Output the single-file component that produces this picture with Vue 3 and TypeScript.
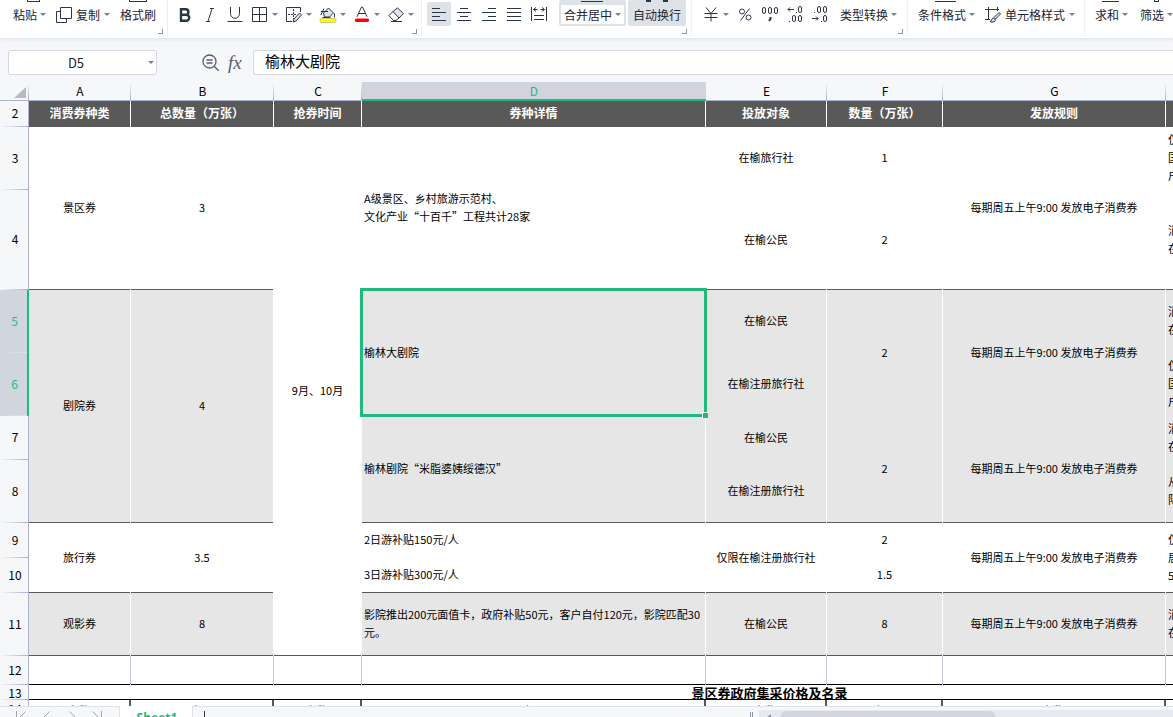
<script setup lang="ts">
interface Cell {
  text: string
  span?: number
  left?: boolean
  line?: boolean
  grey?: boolean
  selected?: boolean
}
interface Row {
  n: number
  h: number
  sel?: boolean
  cells: Cell[]
}

const columns = [
  { name: 'A', w: 102 },
  { name: 'B', w: 143 },
  { name: 'C', w: 88 },
  { name: 'D', w: 344 },
  { name: 'E', w: 121 },
  { name: 'F', w: 116 },
  { name: 'G', w: 223 },
  { name: 'H', w: 345 },
]
const titles = ['消费券种类', '总数量（万张）', '抢券时间', '券种详情', '投放对象', '数量（万张）', '发放规则', '']
const rule = '每期周五上午9:00 发放电子消费券'

const rows: Row[] = [
  {
    n: 3, h: 63, cells: [
      { text: '景区券', span: 2, line: true },
      { text: '3', span: 2, line: true },
      { text: '9月、10月', span: 9, line: true },
      { text: 'A级景区、乡村旅游示范村、\n文化产业“十百千”工程共计28家', span: 2, left: true, line: true },
      { text: '在榆旅行社' },
      { text: '1' },
      { text: rule, span: 2, line: true },
      { text: '仅\n国\n户', left: true },
    ],
  },
  {
    n: 4, h: 100, cells: [
      { text: '在榆公民', line: true },
      { text: '2', line: true },
      { text: '消\n在', left: true, line: true },
    ],
  },
  {
    n: 5, h: 63, sel: true, cells: [
      { text: '剧院券', span: 4, grey: true, line: true },
      { text: '4', span: 4, grey: true, line: true },
      { text: '榆林大剧院', span: 2, grey: true, left: true, selected: true },
      { text: '在榆公民', grey: true },
      { text: '2', span: 2, grey: true },
      { text: rule, span: 2, grey: true },
      { text: '消\n在', left: true, grey: true },
    ],
  },
  {
    n: 6, h: 63, sel: true, cells: [
      { text: '在榆注册旅行社', grey: true },
      { text: '仅\n国\n户', left: true, grey: true },
    ],
  },
  {
    n: 7, h: 44, cells: [
      { text: '榆林剧院“米脂婆姨绥德汉”', span: 2, grey: true, left: true, line: true },
      { text: '在榆公民', grey: true },
      { text: '2', span: 2, grey: true, line: true },
      { text: rule, span: 2, grey: true, line: true },
      { text: '消\n在', left: true, grey: true },
    ],
  },
  {
    n: 8, h: 63, cells: [
      { text: '在榆注册旅行社', grey: true, line: true },
      { text: '从\n际', left: true, grey: true, line: true },
    ],
  },
  {
    n: 9, h: 35, cells: [
      { text: '旅行券', span: 2, line: true },
      { text: '3.5', span: 2, line: true },
      { text: '2日游补贴150元/人', left: true },
      { text: '仅限在榆注册旅行社', span: 2, line: true },
      { text: '2' },
      { text: rule, span: 2, line: true },
      { text: '仅\n居\n5', span: 2, left: true, line: true },
    ],
  },
  {
    n: 10, h: 35, cells: [
      { text: '3日游补贴300元/人', left: true, line: true },
      { text: '1.5', line: true },
    ],
  },
  {
    n: 11, h: 63, cells: [
      { text: '观影券', grey: true, line: true },
      { text: '8', grey: true, line: true },
      { text: '影院推出200元面值卡，政府补贴50元，客户自付120元，影院匹配30元。', grey: true, left: true, line: true },
      { text: '在榆公民', grey: true, line: true },
      { text: '8', grey: true, line: true },
      { text: rule, grey: true, line: true },
      { text: '消\n在', left: true, grey: true, line: true },
    ],
  },
]
const lastRow = ['名称', '大厅', '名称', '大厅', '名称', '大厅', '名称', '']
</script>

<template>
  <div class="app">
    <header class="toolbar">
      <section class="group clip">
        <button class="tool"><i class="stub s1"></i>粘贴<i class="caret"></i></button>
        <button class="tool wide">
          <svg width="16" height="16" viewBox="0 0 16 16"><path d="M4.500 4.500H.5v11h10v-4M4.500.5h11v11h-11z" /></svg>
          复制<i class="caret"></i>
        </button>
        <button class="tool"><i class="stub s2"></i>格式刷</button>
        <i class="corner"></i>
      </section>

      <section class="group font">
        <div class="letters">
          <button class="tool" aria-label="加粗">
            <svg width="16" height="16" viewBox="0 0 16 16"><path class="bold" d="M4 2.200h4.600a2.800 2.800 0 0 1 0 5.600H4zM4 7.800h5.200a3 3 0 0 1 0 6H4z" /></svg>
          </button>
          <button class="tool" aria-label="斜体">
            <svg width="16" height="16" viewBox="0 0 16 16"><path d="M8 1.500h4M4 14.500h4M10 1.500l-4 13" /></svg>
          </button>
          <button class="tool" aria-label="下划线">
            <svg width="16" height="16" viewBox="0 0 16 16"><path d="M3.500 0v6.500a4.500 4.800 0 0 0 9 0V0M.5 14.500h15" /></svg>
          </button>
        </div>
        <button class="tool icon" aria-label="边框">
          <svg width="16" height="16" viewBox="0 0 16 16"><path d="M.5.5h14v14H.5zM.5 7.500h14M7.500.5v14" /></svg><i class="caret"></i>
        </button>
        <button class="tool icon" aria-label="绘制边框">
          <svg width="16" height="16" viewBox="0 0 16 16"><path d="M6 14.500H.5V.5h14V5" /><path d="M7.500 2v10M2 7.500h9" stroke-dasharray="2 1" /><path class="fill" d="M8 12l5.500-6 2 2-5.500 6-3 1z" /></svg><i class="caret"></i>
        </button>
        <button class="tool icon" aria-label="填充颜色">
          <svg width="16" height="16" viewBox="0 0 16 16"><path class="fill" d="M3.500 6L8.500 1l5 5-4 4h-5z" /><path d="M3.500 4.500H.8M8 4.500H2.500L.8 8M4 1.500l-1.500 3M14.500 6.500v4M2.500 10.500h8" /><rect x="0" y="11.500" width="16" height="4" rx="1" fill="#ff0" stroke="#a0a060" stroke-width=".5" /></svg><i class="caret"></i>
        </button>
        <button class="tool icon" aria-label="字体颜色">
          <svg width="16" height="16" viewBox="0 0 16 16"><path d="M3 9.800L7.500 0h1L13 9.800M4.500 6.500h7" /><rect x="1" y="11.500" width="14" height="3.500" rx="1.500" fill="#f00" stroke="none" /></svg><i class="caret"></i>
        </button>
        <button class="tool icon" aria-label="清除">
          <svg width="16" height="16" viewBox="0 0 16 16"><path class="fill" d="M5 4.500L9.500.8l6 6L11 11z" /><path d="M5 4.500L.8 8.500 5.500 13.500H8L11 11M3 14.500h11" /></svg><i class="caret"></i>
        </button>
        <i class="corner"></i>
      </section>

      <section class="group align">
        <button class="tool square active" aria-label="左对齐">
          <svg width="16" height="16" viewBox="0 0 16 16"><path d="M1 2.500h8M1 6.500h14M1 10.500h8M1 14.500h14" /></svg>
        </button>
        <button class="tool square" aria-label="居中">
          <svg width="16" height="16" viewBox="0 0 16 16"><path d="M4 2.500h8M1 6.500h14M4 10.500h8M1 14.500h14" /></svg>
        </button>
        <button class="tool square" aria-label="右对齐">
          <svg width="16" height="16" viewBox="0 0 16 16"><path d="M7 2.500h8M1 6.500h14M7 10.500h8M1 14.500h14" /></svg>
        </button>
        <button class="tool square" aria-label="两端对齐">
          <svg width="16" height="16" viewBox="0 0 16 16"><path d="M1 2.500h14M1 6.500h14M1 10.500h14M1 14.500h14" /></svg>
        </button>
        <button class="tool square" aria-label="分散对齐">
          <svg width="16" height="16" viewBox="0 0 16 16"><path d="M.5 1v14M15.500 1v14M2.500 3.500h4M9.500 3.500h4M5 1.500l-2.500 2L5 5.500M11 1.500l2.500 2-2.500 2M3 9.500h10M3 13.500h10" /></svg>
        </button>
        <button class="tool merge"><i class="stub s3"></i>合并居中<i class="caret"></i></button>
        <button class="tool wrap"><i class="stub s4"></i>自动换行</button>
        <i class="corner"></i>
      </section>

      <section class="group number">
        <button class="tool icon" aria-label="货币">
          <svg width="16" height="16" viewBox="0 0 16 16"><path d="M3 .5l5 6 5-6M1.500 6.500h13M1.500 10.500h13M8 6.500v8" /></svg><i class="caret"></i>
        </button>
        <div class="letters">
          <button class="tool" aria-label="百分比">
            <svg width="16" height="16" viewBox="0 0 16 16"><circle cx="5" cy="4.500" r="2.500" /><circle cx="11.500" cy="10.500" r="2.500" /><path d="M12.500 1.500l-9 12" /></svg>
          </button>
          <button class="tool" aria-label="千位分隔">
            <svg width="16" height="16" viewBox="0 0 16 16"><rect x=".5" y=".5" width="3" height="6" rx="1.500" /><rect x="6.500" y=".5" width="3" height="6" rx="1.500" /><rect x="12.500" y=".5" width="3" height="6" rx="1.500" /><path class="thick" d="M8.500 10v2l-1.500 2" /></svg>
          </button>
          <button class="tool" aria-label="增加小数位">
            <svg width="16" height="16" viewBox="0 0 16 16"><path d="M1 2.500h6M3 .5l-2 2 2 2M9 5.500h1M2 14.500h1" /><rect x="11.500" y="-.5" width="3" height="6" rx="1.500" /><rect x="5.500" y="8.500" width="3" height="6" rx="1.500" /><rect x="11.500" y="8.500" width="3" height="6" rx="1.500" /></svg>
          </button>
          <button class="tool" aria-label="减少小数位">
            <svg width="16" height="16" viewBox="0 0 16 16"><path d="M0 11.500h6M4 9.500l2 2-2 2M2 5.500h1M9 14.500h1" /><rect x="5.500" y="-.5" width="3" height="6" rx="1.500" /><rect x="11.500" y="-.5" width="3" height="6" rx="1.500" /><rect x="11.500" y="8.500" width="3" height="6" rx="1.500" /></svg>
          </button>
        </div>
        <button class="tool convert">类型转换<i class="caret"></i></button>
        <i class="corner"></i>
      </section>

      <section class="group styles">
        <button class="tool"><i class="stub s5"></i>条件格式<i class="caret"></i></button>
        <button class="tool wide">
          <svg width="16" height="16" viewBox="0 0 16 16"><path d="M0 2.500h14M3.500 0v13M0 12.500h5M12.500 0v4" /><path class="fill" d="M14 5.500l-5 5 1.500 1.500L15.500 7zM8.500 11l-2 1.500-1 2.500h3.500l1.500-2z" /></svg>
          单元格样式<i class="caret"></i>
        </button>
      </section>

      <section class="group data">
        <button class="tool"><i class="stub s6"></i>求和<i class="caret"></i></button>
        <button class="tool"><i class="stub s7"></i>筛选<i class="caret"></i></button>
      </section>
    </header>

    <div class="formula">
      <div class="namebox">
        <input class="name" value="D5" aria-label="名称框" /><i class="caret"></i>
      </div>
      <div class="fx">
        <svg width="18" height="18" viewBox="0 0 18 18" aria-hidden="true"><circle cx="7.500" cy="7.500" r="6.500" /><path d="M12.200 12.200l4.500 4.500M4.500 6h6M4.500 9h6" /></svg>
        <span class="fxt">fx</span>
      </div>
      <input class="expr" value="榆林大剧院" aria-label="编辑栏" />
    </div>

    <main class="sheet">
      <table>
        <colgroup>
          <col class="numcol" />
          <col v-for="c in columns" :key="c.name" :style="{ width: c.w + 'px' }" />
        </colgroup>
        <thead>
          <tr class="letters-row">
            <th class="all"><svg width="12" height="11" viewBox="0 0 12 11"><path d="M12 0v11H0z" /></svg></th>
            <th v-for="c in columns" :key="c.name" scope="col" :class="{ on: c.name === 'D' }">{{ c.name }}</th>
          </tr>
        </thead>
        <tbody>
          <tr class="titles">
            <th class="num" scope="row">2</th>
            <td v-for="(t, i) in titles" :key="i">{{ t }}</td>
          </tr>
          <tr v-for="r in rows" :key="r.n" :style="{ height: r.h + 'px' }">
            <th class="num" scope="row" :class="{ on: r.sel }">{{ r.n }}</th>
            <td
              v-for="(c, i) in r.cells"
              :key="i"
              :rowspan="c.span || 1"
              :class="{ grey: c.grey, line: c.line, left: c.left, picked: c.selected }"
            >{{ c.text }}<i v-if="c.selected" class="selection"></i></td>
          </tr>
          <tr class="blank">
            <th class="num" scope="row">12</th>
            <td v-for="c in columns" :key="c.name"></td>
          </tr>
          <tr class="caption">
            <th class="num" scope="row">13</th>
            <td :colspan="columns.length">景区券政府集采价格及名录</td>
          </tr>
          <tr class="last">
            <th class="num" scope="row">14</th>
            <td v-for="(t, i) in lastRow" :key="i">{{ t }}</td>
          </tr>
        </tbody>
      </table>
    </main>

    <footer class="bottom">
      <nav class="pager">
        <svg width="90" height="14" viewBox="0 0 90 14" aria-hidden="true"><path d="M.5 0v12M9.500.5l-6 6 6 6M33.500.5l-6 6 6 6M53.500.5l6 6-6 6M76.500.5l6 6-6 6M85.500 0v12" /></svg>
      </nav>
      <button class="tab">Sheet1</button>
      <div class="rest">
        <i class="plus"></i>
        <i class="grip"></i>
        <div class="track"><svg width="6" height="10" viewBox="0 0 6 10" aria-hidden="true"><path d="M5 1v8L0 5z" /></svg><i class="thumb"></i></div>
      </div>
    </footer>
  </div>
</template>

<style>
body {
  overflow: hidden;
}
</style>

<style scoped>
.app {
  --ink: #2c3447;
  --bar: #f5f7f9;
  --rule: #a9b2cf;
  --green: #1fbb7d;
  --dark: #595959;
  display: flex;
  flex-direction: column;
  height: 100vh;
  overflow: hidden;
  background: var(--bar);
  color: #000;
  font-family: "Noto Sans CJK SC", sans-serif;
  font-size: 11px;
}
button,
input {
  font: inherit;
  color: inherit;
  border: 0;
  padding: 0;
  margin: 0;
  background: none;
}
svg {
  display: block;
  flex: none;
  fill: none;
  stroke: var(--ink);
  overflow: visible;
}
.toolbar {
  display: flex;
  flex: none;
  height: 38px;
  background: #fff;
  box-shadow: 0 1px 4px #d9dce2;
  color: #1c2333;
  font-size: 12px;
  overflow: clip;
  overflow-clip-margin: 5px;
}
.group {
  position: relative;
  display: flex;
  flex: none;
  gap: 10px;
  height: 29px;
  margin-bottom: 9px;
  padding: 0 10px;
}
.group::after {
  content: "";
  position: absolute;
  top: 0;
  right: 0;
  width: 1px;
  height: 36px;
  background: #eceef1;
}
.group:last-child::after {
  display: none;
}
.clip {
  padding: 0 12px 0 13px;
}
.font {
  gap: 8px;
  padding: 0 8px 0 9px;
}
.align {
  gap: 1px;
  padding: 0 6px 0 5px;
}
.number {
  gap: 8px;
  padding: 0 11px;
}
.data {
  gap: 12px;
}
.letters {
  display: flex;
  gap: 9px;
}
.font .letters {
  margin-right: 1px;
}
.tool {
  position: relative;
  display: flex;
  flex: none;
  align-items: center;
  gap: 3px;
  height: 29px;
  white-space: nowrap;
  line-height: 18px;
}
.tool.icon,
.tool.wide {
  gap: 4px;
}
.tool.square {
  justify-content: center;
  width: 24px;
  height: 24px;
  margin-top: 2px;
  border-radius: 2px;
}
.active {
  background: #dde2e6;
}
.tool.merge {
  box-sizing: border-box;
  width: 67px;
  height: 26px;
  padding-left: 3px;
  margin-left: 7px;
  border: 2px solid #dde2e6;
  border-top: 5px solid #dde2e6;
  background: #fff;
  border-radius: 2px;
}
.tool.wrap {
  box-sizing: border-box;
  justify-content: center;
  width: 58px;
  height: 26px;
  padding-top: 3px;
  margin-left: 1px;
  background: #dde2e6;
  border-radius: 2px;
}
.convert {
  margin-left: 4px;
}
.caret {
  flex: none;
  width: 0;
  height: 0;
  border: 3px solid transparent;
  border-top: 3px solid #76809c;
  border-bottom: 0;
}
.corner {
  position: absolute;
  right: 5px;
  top: 29px;
  width: 4px;
  height: 4px;
  border: solid #8a93ab;
  border-width: 0 1px 1px 0;
}
.stub {
  position: absolute;
  top: 0;
  left: 14px;
  width: 11px;
  height: 1px;
  border: solid var(--ink);
  border-width: 0 1px 1px;
}
.s2 {
  left: 9px;
  width: 16px;
}
.s3 {
  top: -5px;
  left: 20px;
  width: 22px;
  border-width: 0 0 1px;
}
.s4 {
  left: 18px;
  width: 12px;
  height: 2px;
  border-width: 0 5px;
}
.s5 {
  left: 17px;
  width: 21px;
  border-width: 0 0 1px;
}
.s6 {
  left: 7px;
  width: 17px;
  border-width: 0 0 1px;
}
.s7 {
  left: 14px;
  width: 3px;
}
.bold {
  stroke-width: 2.4;
}
.thick {
  stroke-width: 2;
}
.fill {
  fill: #dfe3e8;
}
.formula {
  display: flex;
  flex: none;
  align-items: center;
  height: 25px;
  padding: 12px 0 7px 8px;
}
.namebox {
  display: flex;
  align-items: center;
  box-sizing: border-box;
  width: 149px;
  height: 25px;
  padding-right: 2px;
  border: 1px solid #d5d8e0;
  border-radius: 2px;
  background: #fff;
}
.name {
  flex: 1;
  min-width: 0;
  padding-right: 5px;
  text-align: center;
  font-size: 13px;
  color: #222;
}
.fx {
  display: flex;
  align-items: center;
  gap: 8px;
  width: 51px;
  padding-left: 45px;
}
.fx svg {
  stroke: #545d76;
  stroke-width: 1.3;
}
.fxt {
  font: italic 19px/22px "Liberation Serif", serif;
  color: #545d76;
}
.expr {
  flex: 1;
  box-sizing: border-box;
  min-width: 0;
  height: 25px;
  padding: 0 11px 5px;
  border: 1px solid #d5d8e0;
  border-right: 0;
  border-radius: 2px 0 0 2px;
  background: #fff;
  font-size: 15px;
  line-height: 18px;
}
.sheet {
  flex: 1;
  min-height: 0;
  overflow: hidden;
}
table {
  table-layout: fixed;
  width: 1511px;
  border-spacing: 0;
  background: #fff;
}
.numcol {
  width: 29px;
}
th,
td {
  box-sizing: border-box;
  padding: 0 2px 3px;
  border-right: 1px solid #fff;
  text-align: center;
  vertical-align: middle;
  line-height: 18px;
  font-weight: normal;
  white-space: pre-line;
}
.letters-row {
  height: 19px;
}
.letters-row th {
  height: 19px;
  padding: 0 0 2px;
  border-right: 0;
  font-size: 12px;
  line-height: 16px;
  background:
    linear-gradient(#f5f7f9, #a9b2cf) right / 1px 100% no-repeat,
    linear-gradient(#a9b2cf, #a9b2cf) bottom / 100% 1px no-repeat,
    #f5f7f9;
}
.letters-row th.on {
  background: linear-gradient(#1fbb7d, #1fbb7d) bottom / 100% 2px no-repeat, #d1d4dd;
  color: var(--green);
}
.all svg {
  margin: 4px 0 0 14px;
  fill: #b8bcc2;
  stroke: none;
}
.num,
.num.on {
  padding: 0 0 2px 2px;
  border-right: 1px solid var(--rule);
  font-size: 12px;
  line-height: 14px;
  background: linear-gradient(90deg, #f5f7f9, #a9b2cf) bottom / 100% 1px no-repeat, #f5f7f9;
}
.num.on {
  border-right: 2px solid var(--green);
  color: var(--green);
  background: linear-gradient(90deg, #d1d5de, #dfe3ea) bottom / 100% 1px no-repeat, #d1d5de;
}
.titles {
  height: 26px;
}
.titles td {
  padding: 0 2px 2px;
  background: var(--dark);
  color: #fff;
  font-size: 12px;
  font-weight: bold;
}
.grey {
  background: #e6e6e6;
}
.line {
  box-shadow: inset 0 -1px var(--dark);
}
.left {
  text-align: left;
}
.picked {
  position: relative;
}
.selection {
  position: absolute;
  inset: -2px -2px -1px -2px;
  border: 3px solid var(--green);
}
.selection::after {
  content: "";
  position: absolute;
  right: -4px;
  bottom: -4px;
  width: 5px;
  height: 5px;
  border: solid #fff;
  border-width: 1px 0 0 1px;
  background: var(--green);
}
.blank {
  height: 29px;
}
.blank td {
  border-right-color: #c5cadb;
  box-shadow: inset 0 -1px #000;
}
.caption {
  height: 15px;
}
.caption .num {
  padding-bottom: 0;
}
.caption td {
  padding: 0;
  box-shadow: inset 0 -1px #000;
  font-size: 13px;
  font-weight: bold;
  line-height: 14px;
}
.last {
  height: 20px;
}
.last td {
  padding: 0;
  border-right: 2px solid var(--dark);
  color: #777;
}
.bottom {
  display: flex;
  flex: none;
  height: 11px;
  overflow: hidden;
}
.pager {
  box-sizing: border-box;
  width: 120px;
  height: 28px;
  padding: 4px 0 0 16px;
  border: solid #dfe1ea;
  border-width: 1px 1px 0 0;
}
.pager svg {
  stroke: #9ea3ad;
}
.tab {
  width: 72px;
  height: 24px;
  padding-left: 2px;
  background: #fff;
  color: var(--green);
  font: bold 12px/24px "Noto Sans", sans-serif;
}
.rest {
  display: flex;
  flex: 1;
  height: 28px;
  border: solid #dfe1ea;
  border-width: 1px 0 0 1px;
}
.plus {
  width: 1px;
  height: 12px;
  margin: 4px 0 0 11px;
  background: var(--ink);
}
.grip {
  width: 1px;
  height: 12px;
  margin: 5px 6px 0 auto;
  border: solid #8a93ab;
  border-width: 0 1px;
}
.track {
  display: flex;
  width: 414px;
  height: 20px;
  margin-top: 3px;
  background: #e8e9ef;
}
.track svg {
  margin: 3px 8px 0 7px;
  fill: #8a93ab;
  stroke: none;
}
.thumb {
  width: 216px;
  height: 14px;
  margin-top: 1px;
  border-radius: 7px;
  background: #d4d6de;
}
</style>
